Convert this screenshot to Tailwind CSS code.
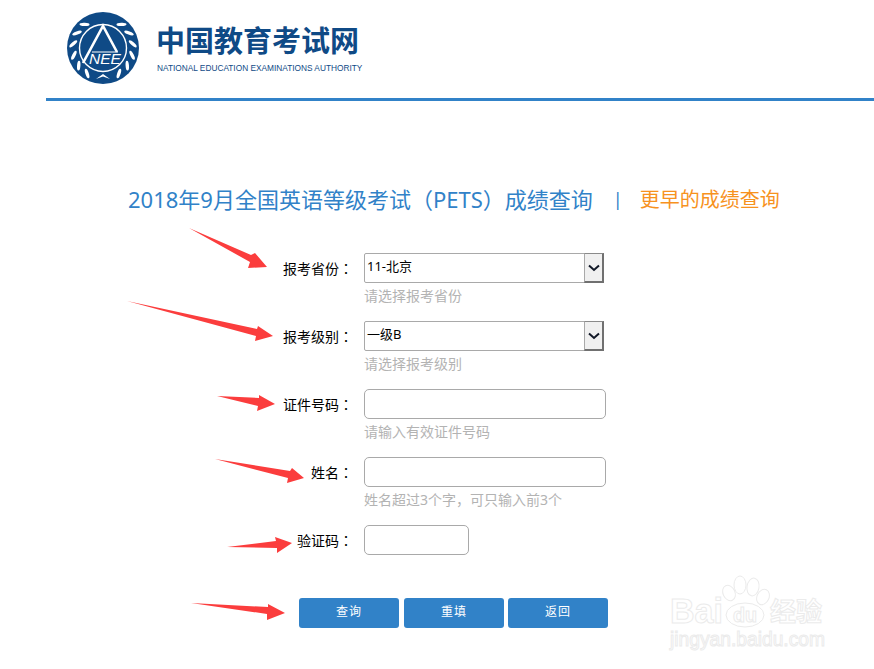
<!DOCTYPE html>
<html lang="zh-CN">
<head>
  <meta charset="UTF-8" />
  <title>成绩查询</title>
  <script src="https://cdn.jsdelivr.net/npm/@tailwindcss/browser@4"></script>
</head>
<body class="relative w-[874px] h-[669px] overflow-hidden bg-white font-['Noto_Sans','Noto_Sans_CJK_SC','Liberation_Sans',sans-serif]">

  <!-- header -->
  <header class="ml-[46px] h-[101px] border-b-[3px] border-[#3182c8] flex items-start pl-[21px] pt-[12px]">
    <svg class="w-[72px] h-[72px] shrink-0" viewBox="67 12 72 72">
      <circle cx="103" cy="48" r="36" fill="#0f4a86" />
      <circle cx="103" cy="48" r="23.5" fill="none" stroke="#fff" stroke-width="1.4" />
      <!-- laurel, left branch -->
      <g fill="#fff">
        <g transform="rotate(-38 103 48)"><ellipse cx="103" cy="18" rx="1.7" ry="5" transform="rotate(-50 103 18)" /></g>
        <g transform="rotate(-60 103 48)"><ellipse cx="103" cy="18" rx="1.7" ry="5" transform="rotate(-50 103 18)" /></g>
        <g transform="rotate(-82 103 48)"><ellipse cx="103" cy="18" rx="1.7" ry="5" transform="rotate(-50 103 18)" /></g>
        <g transform="rotate(-104 103 48)"><ellipse cx="103" cy="18" rx="1.7" ry="5" transform="rotate(-50 103 18)" /></g>
        <g transform="rotate(-126 103 48)"><ellipse cx="103" cy="18" rx="1.7" ry="5" transform="rotate(-50 103 18)" /></g>
        <g transform="rotate(-148 103 48)"><ellipse cx="103" cy="18" rx="1.7" ry="5" transform="rotate(-50 103 18)" /></g>
        <!-- right branch -->
        <g transform="rotate(38 103 48)"><ellipse cx="103" cy="18" rx="1.7" ry="5" transform="rotate(50 103 18)" /></g>
        <g transform="rotate(60 103 48)"><ellipse cx="103" cy="18" rx="1.7" ry="5" transform="rotate(50 103 18)" /></g>
        <g transform="rotate(82 103 48)"><ellipse cx="103" cy="18" rx="1.7" ry="5" transform="rotate(50 103 18)" /></g>
        <g transform="rotate(104 103 48)"><ellipse cx="103" cy="18" rx="1.7" ry="5" transform="rotate(50 103 18)" /></g>
        <g transform="rotate(126 103 48)"><ellipse cx="103" cy="18" rx="1.7" ry="5" transform="rotate(50 103 18)" /></g>
        <g transform="rotate(148 103 48)"><ellipse cx="103" cy="18" rx="1.7" ry="5" transform="rotate(50 103 18)" /></g>
        <path d="M96 79 L103 74 L110 79 L103 76.5 Z" />
      </g>
      <path d="M83 63 L103 26 L117 52" fill="none" stroke="#fff" stroke-width="2.6" />
      <path d="M92 52 L118 52" fill="none" stroke="#fff" stroke-width="1" />
      <text x="105" y="63.5" text-anchor="middle" fill="#fff" font-size="14" font-style="italic" font-family="Liberation Sans" textLength="32" lengthAdjust="spacingAndGlyphs">NEE</text>
    </svg>
    <div class="ml-[17px] flex flex-col">
      <div class="mt-[6px] text-[29px] leading-[42px] font-bold text-[#0f4a86] whitespace-nowrap font-['Noto_Sans_CJK_SC',sans-serif]">中国教育考试网</div>
      <div class="mt-[2px] ml-[1px] text-[8.3px] leading-[12px] text-[#0f4a86] whitespace-nowrap font-['Liberation_Sans',sans-serif]">NATIONAL EDUCATION EXAMINATIONS AUTHORITY</div>
    </div>
  </header>

  <!-- title -->
  <div class="mt-[81px] ml-[128px] h-[34px] flex items-center whitespace-nowrap">
    <h1 class="-mt-[2px] text-[22px] leading-[34px] text-[#3182c8]">2018年9月全国英语等级考试<span lang="zh-TW" class="font-['Noto_Sans_CJK_TC',sans-serif]">（</span>PETS<span lang="zh-TW" class="font-['Noto_Sans_CJK_TC',sans-serif]">）</span>成绩查询</h1>
    <span class="ml-[20px] text-[18px] text-[#3182c8]">|</span>
    <a class="ml-[17px] mt-[2px] text-[20px] leading-[34px] text-[#f7921e]" href="#">更早的成绩查询</a>
  </div>

  <!-- form -->
  <form class="mt-[37px] flex flex-col gap-[38px]">
    <div class="h-[30px] flex items-center">
      <label class="w-[353px] text-right text-[14px] text-black">报考省份<span lang="zh-TW" class="font-['Noto_Sans_CJK_TC',sans-serif]">：</span></label>
      <div class="relative ml-[11px] w-[240px] h-[30px]">
        <select class="w-full h-full appearance-none border border-[#a9a9a9] rounded-l-[2px] pl-[2px] pb-[2px] text-[13px] text-black bg-white">
          <option>11-北京</option>
        </select>
        <span class="absolute right-0 top-0 w-[20px] h-[30px] bg-[#f0f0f0] border border-[#a9a9a9] border-t-[#8a8a8a] border-r-[#707070] border-b-[#707070] border-r-2 border-b-2 flex items-center justify-center">
          <svg class="w-[12px] h-[8px]" viewBox="0 0 12 8"><path d="M1 1.5 L6 6 L11 1.5" fill="none" stroke="#111827" stroke-width="2" /></svg>
        </span>
        <p class="absolute left-0 top-[33px] text-[14px] leading-[20px] text-[#b3b3b3] whitespace-nowrap">请选择报考省份</p>
      </div>
    </div>
    <div class="h-[30px] flex items-center">
      <label class="w-[353px] text-right text-[14px] text-black">报考级别<span lang="zh-TW" class="font-['Noto_Sans_CJK_TC',sans-serif]">：</span></label>
      <div class="relative ml-[11px] w-[240px] h-[30px]">
        <select class="w-full h-full appearance-none border border-[#a9a9a9] rounded-l-[2px] pl-[2px] pb-[2px] text-[13px] text-black bg-white">
          <option>一级B</option>
        </select>
        <span class="absolute right-0 top-0 w-[20px] h-[30px] bg-[#f0f0f0] border border-[#a9a9a9] border-t-[#8a8a8a] border-r-[#707070] border-b-[#707070] border-r-2 border-b-2 flex items-center justify-center">
          <svg class="w-[12px] h-[8px]" viewBox="0 0 12 8"><path d="M1 1.5 L6 6 L11 1.5" fill="none" stroke="#111827" stroke-width="2" /></svg>
        </span>
        <p class="absolute left-0 top-[33px] text-[14px] leading-[20px] text-[#b3b3b3] whitespace-nowrap">请选择报考级别</p>
      </div>
    </div>
    <div class="h-[30px] flex items-center">
      <label class="w-[353px] text-right text-[14px] text-black">证件号码<span lang="zh-TW" class="font-['Noto_Sans_CJK_TC',sans-serif]">：</span></label>
      <div class="relative ml-[11px] w-[242px] h-[30px]">
        <input class="w-full h-full border border-[#a9a9a9] rounded-[5px] bg-white" type="text" />
        <p class="absolute left-0 top-[33px] text-[14px] leading-[20px] text-[#b3b3b3] whitespace-nowrap">请输入有效证件号码</p>
      </div>
    </div>
    <div class="h-[30px] flex items-center">
      <label class="w-[353px] text-right text-[14px] text-black">姓名<span lang="zh-TW" class="font-['Noto_Sans_CJK_TC',sans-serif]">：</span></label>
      <div class="relative ml-[11px] w-[242px] h-[30px]">
        <input class="w-full h-full border border-[#a9a9a9] rounded-[5px] bg-white" type="text" />
        <p class="absolute left-0 top-[33px] text-[14px] leading-[20px] text-[#b3b3b3] whitespace-nowrap">姓名超过3个字，可只输入前3个</p>
      </div>
    </div>
    <div class="h-[30px] flex items-center">
      <label class="w-[353px] text-right text-[14px] text-black">验证码<span lang="zh-TW" class="font-['Noto_Sans_CJK_TC',sans-serif]">：</span></label>
      <input class="ml-[11px] w-[105px] h-[30px] border border-[#a9a9a9] rounded-[5px] bg-white" type="text" />
    </div>
    <div class="mt-[5px] ml-[299px] flex">
      <button type="button" class="w-[100px] h-[30px] pb-[2px] rounded-[3px] bg-[#3182c8] text-white text-[12px] tracking-[1px]">查询</button>
      <button type="button" class="ml-[5px] w-[100px] h-[30px] pb-[2px] rounded-[3px] bg-[#3182c8] text-white text-[12px] tracking-[1px]">重填</button>
      <button type="button" class="ml-[4px] w-[100px] h-[30px] pb-[2px] rounded-[3px] bg-[#3182c8] text-white text-[12px] tracking-[1px]">返回</button>
    </div>
  </form>

  <!-- red annotation arrows drawn over the page -->
  <svg class="absolute left-0 top-0 pointer-events-none" width="874" height="669" viewBox="0 0 874 669">
    <g fill="#fb3d3d">
      <polygon points="189,228 251,255 255,253 267,267 248,268 250,262" />
      <polygon points="127,301 257,329 258,326 273,336 255,341 256,336" />
      <polygon points="217,396 259,398 259,395 275,404 257,411 258,406" />
      <polygon points="215,459 290,471 292,468 304,478 287,483 288,478" />
      <polygon points="227,547 276,541 275,537 292,543 277,553 277,548" />
      <polygon points="191,603 268,607 268,604 285,613 267,620 267,614" />
    </g>
  </svg>

  <!-- baidu watermark -->
  <svg class="absolute left-0 top-0 pointer-events-none" width="874" height="669" viewBox="0 0 874 669">
    <g fill="#fff" stroke="#ebebeb" stroke-width="1">
      <text x="670" y="623" font-size="35" font-weight="700" font-family="Liberation Sans" textLength="53" lengthAdjust="spacingAndGlyphs">Bai</text>
      <ellipse cx="729" cy="593" rx="6" ry="8" transform="rotate(-25 729 593)" />
      <ellipse cx="740" cy="585" rx="6" ry="9" />
      <ellipse cx="753" cy="587" rx="6" ry="9" transform="rotate(10 753 587)" />
      <ellipse cx="763" cy="597" rx="6" ry="8" transform="rotate(25 763 597)" />
      <ellipse cx="745" cy="615" rx="19" ry="12" />
      <text x="733" y="622" font-size="20" font-weight="700" font-family="Liberation Sans" textLength="24" lengthAdjust="spacingAndGlyphs">du</text>
      <text x="770" y="621" font-size="26" font-weight="700" font-family="Noto Sans CJK SC">经验</text>
      <text x="670" y="646" font-size="20" font-family="Liberation Sans" textLength="155" lengthAdjust="spacingAndGlyphs">jingyan.baidu.com</text>
    </g>
  </svg>
</body>
</html>
